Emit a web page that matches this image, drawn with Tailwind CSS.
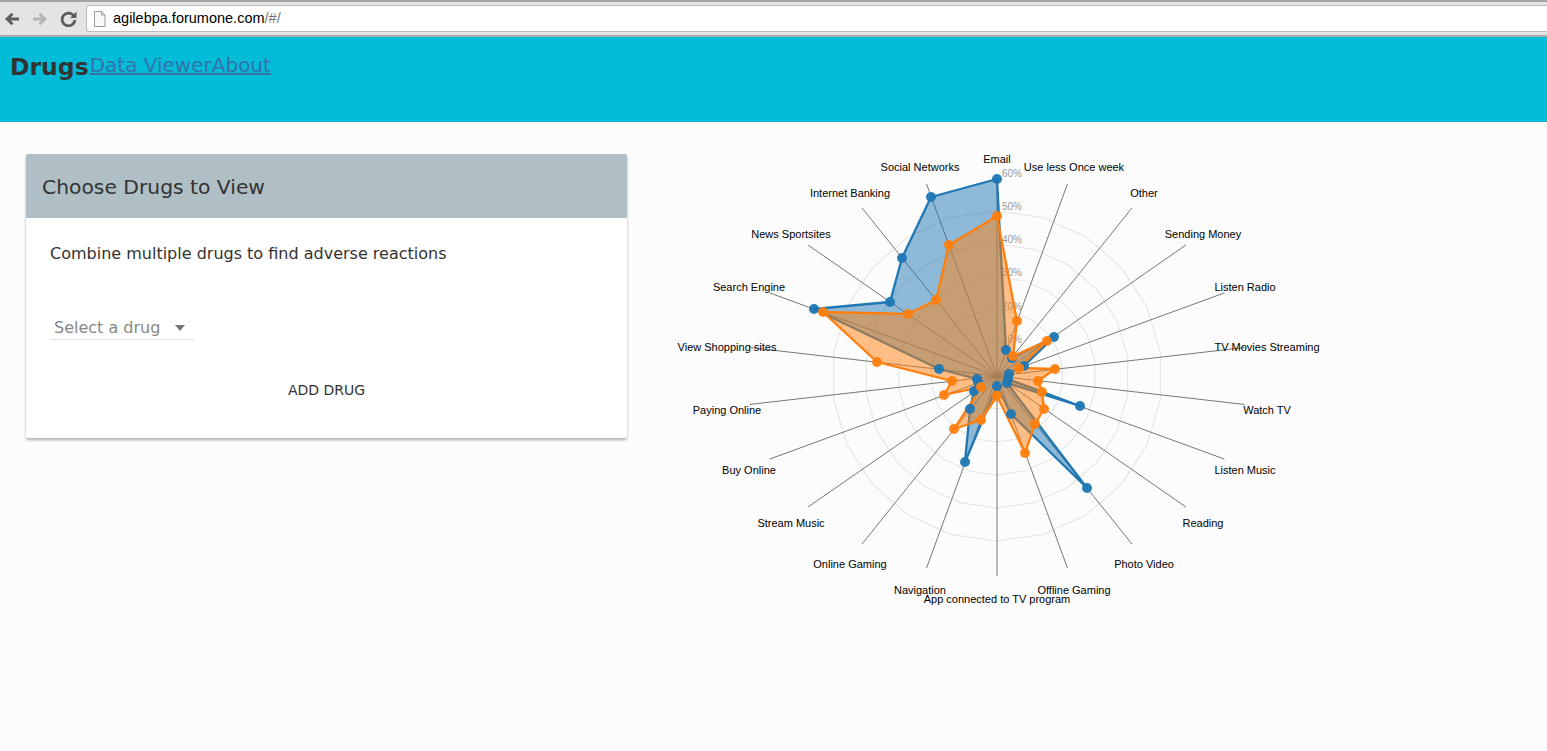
<!DOCTYPE html>
<html lang="en">
<head>
    <meta charset="UTF-8">
    <title>Drugs</title>
    <script src="https://cdn.jsdelivr.net/npm/@tailwindcss/browser@4"></script>
</head>
<body class="h-[751px] overflow-hidden bg-[#fcfcfc] font-['DejaVu_Sans',sans-serif] text-[#333]">
    <!-- Browser toolbar -->
    <div class="flex h-[37px] items-center border-t-2 border-b-2 border-t-[#a4a4a4] border-b-[#ababab] bg-[#e4e4e4] pl-[4px]">
        <svg class="h-[16px] w-[16px]" viewBox="0 0 16 16"><path d="M15 8H4M8.500 2.800 3 8l5.500 5.200" fill="none" stroke="#5c5c5c" stroke-width="2.800"/></svg>
        <svg class="ml-[12px] h-[16px] w-[16px]" viewBox="0 0 16 16"><path d="M1 8h11M7.500 2.800 13 8l-5.500 5.200" fill="none" stroke="#b4b4b4" stroke-width="2.800"/></svg>
        <svg class="ml-[12px] h-[17px] w-[17px]" viewBox="0 0 16 16"><path d="M13 5.500A6 6 0 1 0 14 9.500" fill="none" stroke="#5c5c5c" stroke-width="2.600"/><path d="M15.500 1.500v6h-6z" fill="#5c5c5c"/></svg>
        <div class="ml-[9px] flex h-[27px] flex-1 items-center rounded-l-[3px] border border-r-0 border-[#bbb] bg-white pl-[6px] font-['Liberation_Sans',sans-serif] text-[14.500px] text-black">
            <svg class="mr-[7px] h-[16px] w-[13px]" viewBox="0 0 13 16"><path d="M1.500 .5h7l3.500 3.500v11.500h-10.500z M8.500 .5v3.500h3.500" fill="#fafafa" stroke="#999"/></svg>
            <span>agilebpa.forumone.com<span class="text-[#777]">/#/</span></span>
        </div>
    </div>

    <!-- App header -->
    <header class="flex h-[85px] items-start bg-[#00bcd9] pl-[10px] pt-[14px]">
        <span class="text-[23.500px] leading-[32px] font-bold">Drugs</span>
        <a href="#" class="ml-[1px] text-[20px] leading-[28px] text-[#3672a8] underline">Data Viewer</a>
        <a href="#" class="text-[20px] leading-[28px] text-[#3672a8] underline">About</a>
    </header>

    <main class="flex items-start pl-[26px] pt-[28px]">
        <section class="mt-[4px] h-[284px] w-[601px] rounded-[2px] bg-white shadow-[0_2px_3px_rgba(0,0,0,.3)]">
            <h2 class="flex h-[64px] items-center rounded-t-[2px] bg-[#b0bec5] pl-[16px] pt-[2px] text-[20.300px] font-normal">Choose Drugs to View</h2>
            <p class="pl-[24px] pt-[25px] text-[16px] leading-[22px]">Combine multiple drugs to find adverse reactions</p>
            <div class="ml-[25px] mt-[50px] flex h-[25px] w-[144px] items-center border-b border-[#e0e0e0] pl-[3px] pt-[2px] text-[16px] text-[#888]">
                <span>Select a drug</span>
                <span class="ml-[15px] h-0 w-0 border-x-[5.500px] border-t-[6px] border-x-transparent border-t-[#757575]"></span>
            </div>
            <div class="pt-[38px] text-center text-[14px] leading-[24px] text-[#333]">ADD DRUG</div>
        </section>
        <svg id="radar" class="ml-[33px] h-[470px] w-[700px] overflow-visible" viewBox="660 150 700 470"></svg>
    </main>

    <script>
        const CX = 997, CY = 376;

        // label, label x, label y, blue point, orange point
        const axes = [
            ['Email', 997, 159, [997, 179], [997, 216]],
            ['Use less Once week', 1074, 167, [1006, 350], [1017, 321]],
            ['Other', 1144, 193, [1012, 358], [1013, 356]],
            ['Sending Money', 1203, 234, [1054, 337], [1047, 341]],
            ['Listen Radio', 1245, 287, [1024, 366], [1019, 368]],
            ['TV Movies Streaming', 1267, 347, [1009, 374], [1055, 369]],
            ['Watch TV', 1267, 410, [1008, 379], [1038, 381]],
            ['Listen Music', 1245, 470, [1080, 406], [1042, 392]],
            ['Reading', 1203, 523, [1007, 383], [1044, 409]],
            ['Photo Video', 1144, 564, [1087, 488], [1035, 424]],
            ['Offline Gaming', 1074, 590, [1011, 414], [1025, 453]],
            ['App connected to TV program', 997, 599, [997, 386], [997, 396]],
            ['Navigation', 920, 590, [965, 462], [981, 420]],
            ['Online Gaming', 850, 564, [970, 409], [954, 429]],
            ['Stream Music', 791, 523, [974, 391], [981, 387]],
            ['Buy Online', 749, 470, [978, 382], [944, 395]],
            ['Paying Online', 727, 410, [977, 379], [952, 381]],
            ['View Shopping sites', 727, 347, [939, 369], [877, 362]],
            ['Search Engine', 749, 287, [814, 309], [823, 312]],
            ['News Sportsites', 791, 234, [890, 302], [908, 314]],
            ['Internet Banking', 850, 193, [902, 258], [936, 300]],
            ['Social Networks', 920, 167, [931, 197], [949, 245]],
        ];

        const svg = document.getElementById('radar');

        function add(tag, attrs, text) {
            const el = document.createElementNS('http://www.w3.org/2000/svg', tag);
            Object.entries(attrs).forEach(([k, v]) => el.setAttribute(k, v));
            if (text) el.textContent = text;
            svg.appendChild(el);
        }

        // Grid rings
        [33, 66, 99, 132, 165].forEach(r => {
            const pts = axes.map((a, i) => {
                const t = i * 2 * Math.PI / axes.length;
                return (CX + r * Math.sin(t)) + ',' + (CY - r * Math.cos(t));
            }).join(' ');
            add('polygon', { points: pts, fill: 'none', stroke: '#e6e6e6', 'stroke-width': 1.200 });
        });

        // Spokes and axis labels
        axes.forEach((a, i) => {
            const t = i * 2 * Math.PI / axes.length;
            add('line', { x1: CX, y1: CY, x2: CX + 250 * Math.sin(t), y2: CY - 200 * Math.cos(t), stroke: '#777', 'stroke-width': 1 });
            add('text', { x: a[1], y: a[2] + 4, 'text-anchor': 'middle', 'font-size': 11, 'font-family': 'Liberation Sans, sans-serif', fill: '#000' }, a[0]);
        });

        // Percent ticks
        ['10%', '20%', '30%', '40%', '50%', '60%'].forEach((label, i) => {
            add('text', { x: 1002, y: 343 - i * 33.300, 'font-size': 10, 'font-family': 'Liberation Sans, sans-serif', fill: '#999' }, label);
        });

        // Series
        [[3, '#1f77b4'], [4, '#ff7f0e']].forEach(([key, color]) => {
            const pts = axes.map(a => a[key].join(',')).join(' ');
            add('polygon', { points: pts, fill: color, 'fill-opacity': 0.5, stroke: color, 'stroke-width': 2.300, 'stroke-linejoin': 'round' });
        });
        [[3, '#1f77b4'], [4, '#ff7f0e']].forEach(([key, color]) => {
            axes.forEach(a => add('circle', { cx: a[key][0], cy: a[key][1], r: 5, fill: color, 'fill-opacity': 0.95 }));
        });
    </script>
</body>
</html>
